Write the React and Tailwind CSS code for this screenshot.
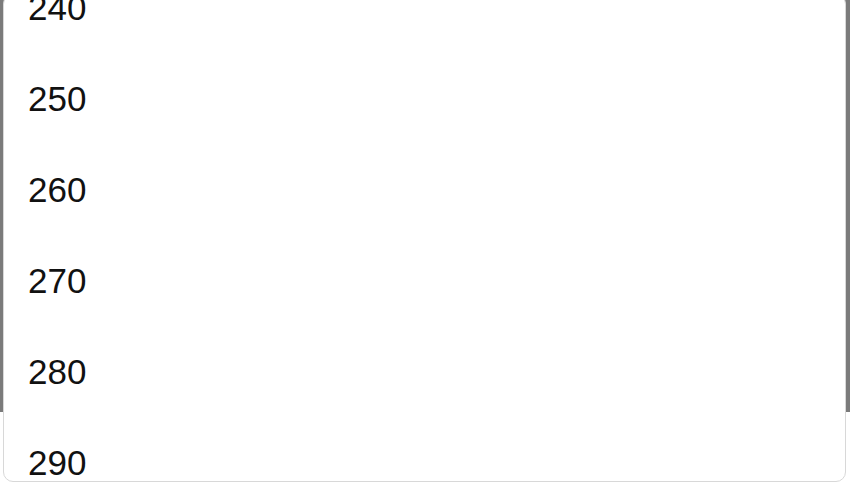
export default function App() {
  const values = [240, 250, 260, 270, 280, 290]

  return (
    <div className="relative h-[486px] w-[850px] overflow-hidden bg-white">
      {/* page behind the open picker */}
      <div className="h-[412px] w-full bg-[#7b7b7b]" />

      {/* picker list */}
      <div className="absolute left-[3px] right-[4px] top-[-6px] bottom-[4px] overflow-hidden rounded-[10px] border border-[#d8d8d8] bg-white">
        <ul className="-mt-[33px]">
          {values.map((v) => (
            <li
              key={v}
              className="flex h-[91px] items-center pl-[24px] font-['Liberation_Sans',Arial,sans-serif] text-[35px] leading-none text-[#111]"
            >
              {v}
            </li>
          ))}
        </ul>
      </div>
    </div>
  )
}
